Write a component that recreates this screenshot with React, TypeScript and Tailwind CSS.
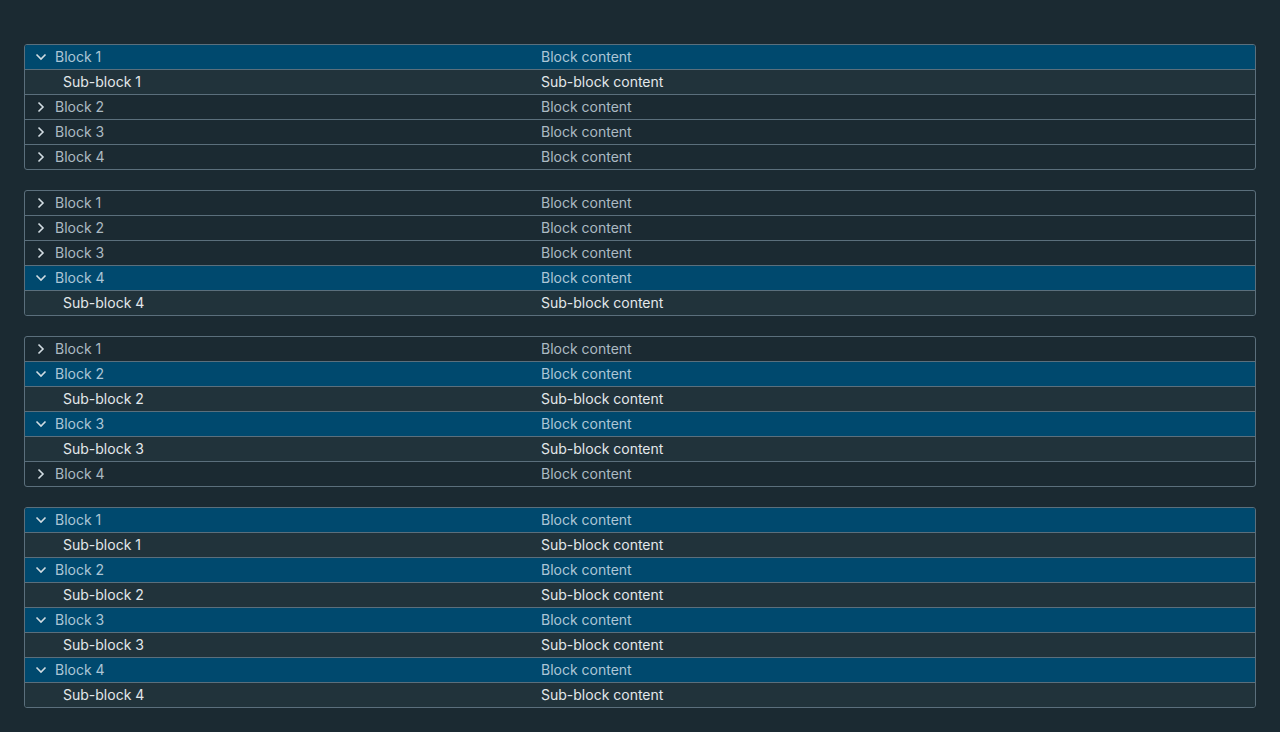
type Block = { id: number; open: boolean };

const stacks: Block[][] = [
    [{ id: 1, open: true }, { id: 2, open: false }, { id: 3, open: false }, { id: 4, open: false }],
    [{ id: 1, open: false }, { id: 2, open: false }, { id: 3, open: false }, { id: 4, open: true }],
    [{ id: 1, open: false }, { id: 2, open: true }, { id: 3, open: true }, { id: 4, open: false }],
    [{ id: 1, open: true }, { id: 2, open: true }, { id: 3, open: true }, { id: 4, open: true }],
];

function Caret({ open }: { open: boolean }) {
    return (
        <svg className="h-[12px] w-[12px] text-[#d2dce2]" viewBox="0 0 12 12" fill="none" stroke="currentColor" strokeWidth={1.6}>
            {open ? <path d="M1.5 3.5 6 8l4.5-4.5" /> : <path d="M3.5 1.5 8 6l-4.5 4.5" />}
        </svg>
    );
}

function StackBlock({ block, first }: { block: Block; first: boolean }) {
    return (
        <>
            <div
                className={`flex items-center pb-[1px] ${first ? 'h-[24px]' : 'h-[25px] border-t border-[#5b6f7c]'} ${block.open ? 'bg-[#00496e] text-[#acc6d6]' : 'text-[#acbac3]'}`}
            >
                <div className="flex w-[516px] items-center pl-[10px]">
                    <Caret open={block.open} />
                    <span className="ml-[8px]">Block {block.id}</span>
                </div>
                <div>Block content</div>
            </div>
            {block.open && (
                <div className="flex h-[25px] items-center border-t border-[#5b6f7c] bg-[#21333b] pb-[1px] text-[#e3e8eb]">
                    <div className="w-[516px] pl-[38px]">Sub-block {block.id}</div>
                    <div>Sub-block content</div>
                </div>
            )}
        </>
    );
}

export default function App() {
    return (
        <div
            className="min-h-[732px] bg-[#1b2a32] px-6 pt-[44px] text-[14px]"
            style={{ fontFamily: 'Inter, "Noto Sans", sans-serif' }}
        >
            <div className="flex flex-col gap-[20px]">
                {stacks.map((stack, i) => (
                    <div key={i} className="overflow-hidden rounded-[3px] border border-[#5b6f7c] bg-[#1b2a32]">
                        {stack.map((block, j) => (
                            <StackBlock key={block.id} block={block} first={j === 0} />
                        ))}
                    </div>
                ))}
            </div>
        </div>
    );
}
